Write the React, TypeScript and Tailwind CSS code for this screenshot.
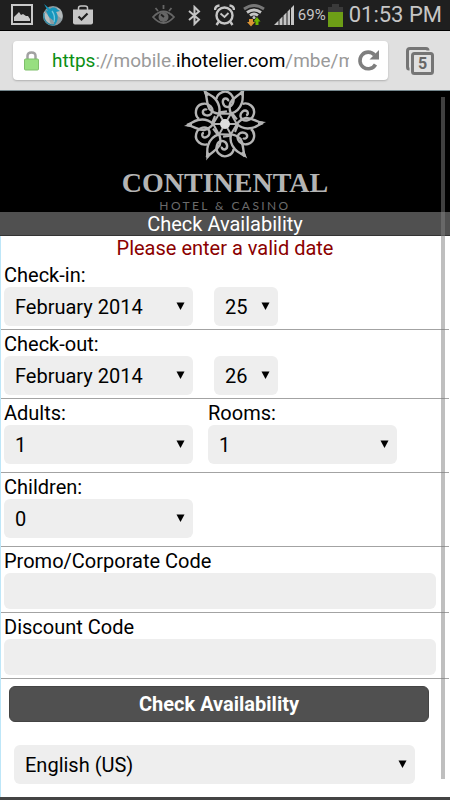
import React from 'react';

const months = ['January 2014', 'February 2014', 'March 2014', 'April 2014'];
const days = Array.from({ length: 28 }, (_, i) => String(i + 1));
const counts = ['0', '1', '2', '3', '4'];

type DropdownProps = {
  id: string;
  label?: string;
  value: string;
  options: string[];
  className: string;
};

const Dropdown = ({ id, label, value, options, className }: DropdownProps) => (
  <div className={`relative ${className}`}>
    <select
      id={id}
      aria-label={label}
      defaultValue={value}
      className="block w-full h-[39px] appearance-none rounded-md bg-[#eeeeee] pl-[11px] text-black outline-none"
    >
      {options.map((option) => (
        <option key={option}>{option}</option>
      ))}
    </select>
    <svg className="pointer-events-none absolute right-2 top-[15px]" width="9" height="8" viewBox="0 0 9 8">
      <path d="M0.5 0.5H8.5L4.5 8Z" fill="#000" />
    </svg>
  </div>
);

const TextField = ({ id, label }: { id: string; label: string }) => (
  <div className="border-b border-[#a3a3a3] pt-0.5 pb-[3px] pl-[3px] pr-[13px]">
    <label htmlFor={id} className="block leading-6">{label}</label>
    <input id={id} type="text" className="block w-full h-9 rounded-md bg-[#eeeeee] px-2 outline-none" />
  </div>
);

const DateRow = ({ id, label, day }: { id: string; label: string; day: string }) => (
  <div className="border-b border-[#a3a3a3] pt-0.5 pb-[3px] pl-[3px]">
    <label htmlFor={id} className="block leading-6">{label}</label>
    <div className="flex gap-[21px]">
      <Dropdown id={id} value="February 2014" options={months} className="w-[189px]" />
      <Dropdown id={`${id}-day`} label={`${label} day`} value={day} options={days} className="w-16" />
    </div>
  </div>
);

const StatusBar = () => (
  <div className="flex h-[31px] items-center border-b border-black bg-[#1f1f1f] pl-[11px] pr-2 text-[#c6c6c6]">
    <div className="flex items-center gap-[9px]">
      <svg width="22" height="22" viewBox="0 0 22 22">
        <rect x="1" y="1" width="20" height="19" fill="#1f1f1f" stroke="#c9c9c9" strokeWidth="2" />
        <path d="M3 17V13L5 11L8 8L10 11L12 10L15 12L17 12L19 15V17Z" fill="#c9c9c9" />
      </svg>
      <svg width="22" height="24" viewBox="0 0 22 24">
        <circle cx="11" cy="13" r="10" fill="#8d9ba0" />
        <path d="M2 9C0 15 4 22 10 22C6 18 9 14 5 11Z" fill="#b9bebf" />
        <path d="M15 5C20 6 21 12 20 16L16 13L14 9Z" fill="#b4b9ba" />
        <path d="M2 1L8 6C10 4 13 4 15 6L18 8L14 9C17 14 16 18 12 23C13 18 11 17 8 15C5 12 6 10 3 7L6 8Z" fill="#1696bd" />
        <path d="M10 8C13 12 13 15 12 19" fill="none" stroke="#75c6dc" strokeWidth="1.3" />
        <path d="M2 10C1 17 5 22 12 22" fill="none" stroke="#2585a3" strokeWidth="1.3" />
      </svg>
      <svg width="20" height="20" viewBox="0 0 20 20">
        <path d="M5.5 5V3Q5.5 1 8 1H12Q14.500 1 14.500 3V5" fill="none" stroke="#c6c6c6" strokeWidth="1.5" />
        <path d="M0 4.500H20V17.500Q20 19.500 18 19.500H2Q0 19.500 0 17.500Z" fill="#c6c6c6" />
        <path d="M5.500 11.500L8.500 14.500L14.500 8.500" fill="none" stroke="#1f1f1f" strokeWidth="2.2" />
      </svg>
    </div>

    <div className="ml-auto flex items-center">
      <svg className="mr-[13px]" width="23" height="20" viewBox="0 0 23 20" fill="none" stroke="#666" strokeWidth="1.8">
        <path d="M1 12Q11.500 1 22 12Q11.500 24 1 12Z" />
        <circle cx="11.500" cy="12" r="5" fill="#666" stroke="none" />
        <path d="M11.500 0V4M3.500 3L6 6M19.500 3L17 6" />
        <path d="M9 9.500L12 12" stroke="#1f1f1f" />
      </svg>
      <svg className="mr-[13px]" width="13" height="21" viewBox="0 0 13 21" fill="none" stroke="#c6c6c6" strokeWidth="2">
        <path d="M1 6L11 14.500L6.500 19V2L11 6.500L1 15" />
      </svg>
      <svg className="mr-2" width="21" height="22" viewBox="0 0 21 22" fill="none" stroke="#c6c6c6" strokeWidth="2.4">
        <circle cx="10.500" cy="11.500" r="8" />
        <path d="M6.500 9.500L10.500 13L14.500 9" strokeWidth="1.800" />
        <path d="M1 6Q1 2 5.500 1.500M20 6Q20 2 15.500 1.500M4.500 18L2.500 21M16.500 18L18.500 21" />
      </svg>
      <svg className="mr-[9px]" width="22" height="23" viewBox="0 0 22 23" fill="none" strokeWidth="2.800">
        <path d="M1 5Q11 -2 21 5" stroke="#777" />
        <path d="M4 8.500Q11 3.500 18 8.500M7 11.500Q11 8.500 15 11.500" stroke="#c6c6c6" />
        <circle cx="11" cy="13.500" r="1.500" fill="#c6c6c6" />
        <path d="M6 15H10V18H12L8 22.500L4 18H6Z" fill="#dc9435" />
        <path d="M12.500 21V17.500H10.500L14 13L17.500 17.500H15.500V21Z" fill="#70b500" />
      </svg>
      <svg className="mr-1" width="20" height="20" viewBox="0 0 20 20" fill="#c6c6c6">
        <path d="M0 20L4.500 15.500V20ZM5.500 20V14.500L8.500 11.500V20ZM9.500 20V10.500L12.500 7.500V20ZM13.500 20V6.500L16 4V20ZM17 20V3L20 0V20Z" />
      </svg>
      <span className="text-[15px] leading-5">69%</span>
      <svg className="ml-0.5 mr-1.5" width="15" height="23" viewBox="0 0 15 23">
        <path d="M4 0H11V3H15V8H0V3H4Z" fill="#3a3a3a" />
        <rect y="8" width="15" height="15" fill="#6d9e16" />
      </svg>
      <span className="text-[22px] leading-6 whitespace-nowrap">01:53 PM</span>
    </div>
  </div>
);

const AddressBar = () => (
  <div className="flex h-[60px] items-center border-b border-[#74868c] bg-[#e0e0e0] pl-[13px] pr-4">
    <div className="flex h-[39px] min-w-0 flex-1 items-center rounded-sm bg-white pl-[11px] pr-2 shadow-[0_1px_2px_#b0b0b0]">
      <svg className="mr-[13px] shrink-0" width="15" height="20" viewBox="0 0 15 20">
        <path d="M3.500 9V5Q3.500 1.500 7.500 1.500T11.500 5V9" fill="none" stroke="#a2a2a2" strokeWidth="2.500" />
        <rect x="0.500" y="8" width="14" height="11" rx="1" fill="#97df80" stroke="#7fbf6b" />
      </svg>
      <div className="min-w-0 flex-1 overflow-hidden whitespace-nowrap text-[19px] leading-6 text-[#9a9a9a]">
        <span className="text-[#0b8f14]">https</span>://mobile.<span className="text-black">ihotelier.com</span>/mbe/m
      </div>
      <button type="button" aria-label="Reload" className="ml-2 shrink-0">
        <svg width="23" height="22" viewBox="0 0 23 22">
          <path d="M17.500 5A8.300 8.300 0 1 0 18.500 14.500" fill="none" stroke="#7e7e7e" strokeWidth="3.600" />
          <path d="M22 0V9.500H12.500Z" fill="#7e7e7e" />
        </svg>
      </button>
    </div>
    <button type="button" aria-label="Tabs" className="ml-[18px] shrink-0">
      <svg width="28" height="28" viewBox="0 0 28 28">
        <path d="M3.500 22H3Q1.500 22 1.500 20V4Q1.500 1.500 4 1.500H20Q22 1.500 22 3.500" fill="none" stroke="#757575" strokeWidth="3" />
        <rect x="6.500" y="6.500" width="20" height="20" rx="2" fill="#e0e0e0" stroke="#757575" strokeWidth="3" />
        <text x="16.500" y="22" textAnchor="middle" fontSize="16" fontWeight="700" fill="#666">5</text>
      </svg>
    </button>
  </div>
);

const Flower = () => (
  <svg width="84" height="70" viewBox="-42 -33 84 70" fill="none" stroke="#b4b4b4" strokeWidth="2.400">
    {[0, 60, 120, 180, 240, 300].map((angle) => (
      <g key={angle} transform={`rotate(${angle})`}>
        {/* pointed petal */}
        <path d="M38 -1C31 -2 28 -6 21 -6C17 -5 14 -3 12 0C16 4 22 5 27 4C32 3 34 0 38 -1Z" />
        <path d="M41 -2L33 -3V2Z" fill="#b4b4b4" stroke="none" />
        {/* curl between two petals */}
        <path d="M26 5C31 9 30 18 23 20C16 22 10 15 14 10C17 7 23 9 22 13C21 15 19 15 18 14" />
        {/* inner star */}
        <path d="M2 0L12 0M12 0L6 10M13 1L10 8" strokeWidth="2" />
      </g>
    ))}
    <circle r="5" fill="#dedede" stroke="none" />
  </svg>
);

const App = () => {
  return (
    <div className="bg-white font-[Roboto,sans-serif] text-xl text-black">
      <StatusBar />
      <AddressBar />

      <main className="relative border-l border-[#bde6f8] pr-px">
        <header className="-mx-px flex flex-col items-center bg-black">
          <Flower />
          <h1 className="mt-2 font-['Liberation_Serif',serif] text-[28px] font-bold leading-7 text-[#b4b4b4]">
            CONTINENTAL
          </h1>
          <p className="mt-0.5 font-['Lato',sans-serif] text-xs leading-[13px] tracking-[0.2em] text-[#6b6b6b]">HOTEL &amp; CASINO</p>
        </header>
        <h2 className="-mx-px h-6 border-b border-[#333] bg-[#505050] text-center leading-6 text-white">
          Check Availability
        </h2>

        <form onSubmit={(e) => e.preventDefault()}>
          <p className="h-[25px] text-center leading-6 text-[#8b0000]">Please enter a valid date</p>

          <DateRow id="check-in" label="Check-in:" day="25" />
          <DateRow id="check-out" label="Check-out:" day="26" />

          <div className="flex gap-[15px] border-b border-[#a3a3a3] pt-0.5 pb-2 pl-[3px]">
            <div>
              <label htmlFor="adults" className="block leading-6">Adults:</label>
              <Dropdown id="adults" value="1" options={counts} className="w-[189px]" />
            </div>
            <div>
              <label htmlFor="rooms" className="block leading-6">Rooms:</label>
              <Dropdown id="rooms" value="1" options={counts} className="w-[189px]" />
            </div>
          </div>

          <div className="border-b border-[#a3a3a3] pt-0.5 pb-2 pl-[3px]">
            <label htmlFor="children" className="block leading-6">Children:</label>
            <Dropdown id="children" value="0" options={counts} className="w-[189px]" />
          </div>

          <TextField id="promo" label="Promo/Corporate Code" />
          <TextField id="discount" label="Discount Code" />

          <div className="pt-[7px] pl-2 pr-5">
            <button
              type="submit"
              className="block w-full h-9 rounded-md border border-[#444] bg-[#505050] font-bold leading-6 text-white"
            >
              Check Availability
            </button>
          </div>

          <div className="pt-[23px] pb-[13px] pl-[13px] pr-[34px]">
            <Dropdown
              id="language"
              label="Language"
              value="English (US)"
              options={['English (US)', 'Español', 'Français']}
              className="w-full"
            />
          </div>
        </form>

        {/* scroll indicator */}
        <div className="absolute top-1.5 bottom-[18px] right-[5px] w-1 bg-[#808080]/50"></div>
      </main>
      <div className="h-[3px] bg-[#444]"></div>
    </div>
  );
};

export default App;
